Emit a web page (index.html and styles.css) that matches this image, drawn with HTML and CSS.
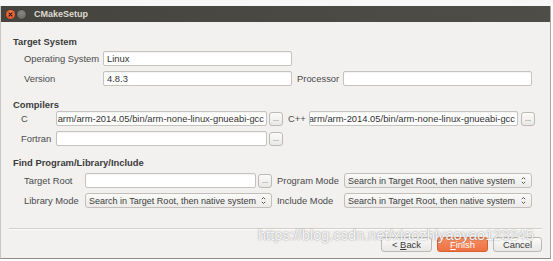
FILE: index.html
```html
<!DOCTYPE html>
<html>
<head>
<meta charset="utf-8">
<link rel="stylesheet" href="styles.css">
</head>
<body>
<div class="screen">
  <div class="topstrip"></div>
  <div class="window">
    <div class="titlebar">
      <span class="wbtn close"><svg width="9" height="9" viewBox="0 0 9 9"><path d="M3 3 L6 6 M6 3 L3 6" stroke="#3a1a10" stroke-width="1.1" stroke-linecap="round"/></svg></span>
      <span class="wbtn min"></span>
      <span class="title">CMakeSetup</span>
    </div>
    <div class="body">
      <section class="group g-target">
        <div class="heading">Target System</div>
        <div class="grid grid-target">
          <label class="lbl">Operating System</label>
          <div class="input">Linux</div>
          <span></span><span></span>
          <label class="lbl">Version</label>
          <div class="input">4.8.3</div>
          <label class="lbl lbl-gap">Processor</label>
          <div class="input"></div>
        </div>
      </section>

      <section class="group g-comp">
        <div class="heading">Compilers</div>
        <div class="grid grid-comp">
          <label class="lbl">C</label>
          <div class="input path"><span>arm/arm-2014.05/bin/arm-none-linux-gnueabi-gcc</span></div>
          <button class="dots">...</button>
          <label class="lbl lbl-gap">C++</label>
          <div class="input path"><span>arm/arm-2014.05/bin/arm-none-linux-gnueabi-gcc</span></div>
          <button class="dots">...</button>
          <label class="lbl">Fortran</label>
          <div class="input"></div>
          <button class="dots">...</button>
        </div>
      </section>

      <section class="group g-find">
        <div class="heading">Find Program/Library/Include</div>
        <div class="grid grid-find">
          <label class="lbl">Target Root</label>
          <div class="input"></div>
          <button class="dots">...</button>
          <label class="lbl lbl-gap">Program Mode</label>
          <div class="combo"><span>Search in Target Root, then native system</span><svg width="5" height="9" viewBox="0 0 5 9"><path d="M0.8 3.2 L2.5 1.5 L4.2 3.2 M0.8 5.8 L2.5 7.5 L4.2 5.8" fill="none" stroke="#555" stroke-width="1"/></svg></div>
          <label class="lbl">Library Mode</label>
          <div class="combo span2"><span>Search in Target Root, then native system</span><svg width="5" height="9" viewBox="0 0 5 9"><path d="M0.8 3.2 L2.5 1.5 L4.2 3.2 M0.8 5.8 L2.5 7.5 L4.2 5.8" fill="none" stroke="#555" stroke-width="1"/></svg></div>
          <label class="lbl lbl-gap">Include Mode</label>
          <div class="combo"><span>Search in Target Root, then native system</span><svg width="5" height="9" viewBox="0 0 5 9"><path d="M0.8 3.2 L2.5 1.5 L4.2 3.2 M0.8 5.8 L2.5 7.5 L4.2 5.8" fill="none" stroke="#555" stroke-width="1"/></svg></div>
        </div>
      </section>

      <div class="separator"></div>

      <div class="actions">
        <button class="btn">&lt; <u>B</u>ack</button>
        <button class="btn primary"><u>F</u>inish</button>
        <button class="btn">Cancel</button>
      </div>
    </div>
    <div class="watermark">https://blog.csdn.net/xiaozhiyaoyao123245</div>
  </div>
</div>
</body>
</html>
```

FILE: styles.css
```css
* { box-sizing: border-box; }
html, body { margin: 0; padding: 0; background: #ffffff; }
body {
  width: 553px;
  height: 261px;
  overflow: hidden;
  font-family: "Liberation Sans", Arial, sans-serif;
  font-size: 9.4px;
  color: #3c3c3c;
}
.screen { width: 553px; height: 261px; }
.topstrip { height: 6px; background: #f7f7f7; }

.window {
  position: relative;
  width: 551px;
  height: 253px;
  background: #f2f1f0;
  border-left: 1px solid #c8c5c1;
  border-right: 1px solid #a9a6a2;
  border-bottom: 1px solid #8e8b87;
}

.titlebar {
  height: 16px;
  background: linear-gradient(90deg, #45443f, #4f4d48);
  display: flex;
  align-items: center;
  padding-left: 5px;
}
.wbtn {
  width: 9px;
  height: 9px;
  border-radius: 50%;
  display: flex;
}
.close {
  background: radial-gradient(circle at 50% 35%, #f47a4e, #df4b1e);
  box-shadow: 0 0 0 0.5px #5a2a18;
}
.min {
  margin-left: 2px;
  background: radial-gradient(circle at 50% 35%, #8c8a85, #5f5d58);
  box-shadow: 0 0 0 0.5px #2e2d2a;
}
.title {
  margin-left: 8px;
  font-weight: bold;
  font-size: 9px;
  color: #dfdbd2;
}

.body {
  padding: 14px 8px 0 0;
}

.heading {
  font-weight: bold;
  line-height: 12px;
  height: 12px;
  padding-left: 12px;
  color: #3c3c3c;
}
.g-target .heading { margin-bottom: 3px; }
.g-comp { margin-top: 13px; }
.g-comp .heading { margin-bottom: 0; }
.g-find { margin-top: 11px; }
.g-find .heading { margin-bottom: 4px; }

.grid {
  display: grid;
  grid-auto-rows: 15px;
  row-gap: 5px;
  align-items: center;
}
.grid-target {
  padding-left: 23px;
  grid-template-columns: 79px 189px 51px 189px;
}
.grid-comp {
  padding-left: 20px;
  grid-template-columns: 35px 211px 16px 26px 209px 17px;
}
.grid-find {
  padding-left: 23px;
  grid-template-columns: 61px 171px 16px 72px 188px;
}
.lbl {
  white-space: nowrap;
  line-height: 15px;
  color: #4a4a4a;
}
.lbl-gap { padding-left: 5px; }

.input {
  height: 15px;
  background: #ffffff;
  border: 1px solid #c6c2bd;
  border-radius: 2px;
  box-shadow: inset 0 1px 1px rgba(0,0,0,0.05);
  line-height: 13px;
  padding: 0 3px;
  color: #333;
  white-space: nowrap;
  overflow: hidden;
}
.path {
  display: flex;
  justify-content: flex-end;
  padding: 0 2px 0 0;
}

.dots {
  justify-self: end;
  width: 14px;
  height: 14px;
  padding: 0;
  margin: 0;
  font-family: inherit;
  font-size: 7px;
  line-height: 10px;
  color: #555;
  background: linear-gradient(#fbfbfa, #e9e8e6);
  border: 1px solid #bdb9b4;
  border-radius: 3px;
}

.combo {
  height: 15px;
  background: linear-gradient(#fafaf9, #ecebe9);
  border: 1px solid #c2beb9;
  border-radius: 3px;
  display: flex;
  align-items: center;
  justify-content: space-between;
  padding: 0 5px 0 3px;
  font-size: 9px;
  white-space: nowrap;
  overflow: hidden;
  color: #3c3c3c;
}
.span2 { grid-column: span 2; }

.separator {
  margin: 20px 0 0 8px;
  height: 1px;
  background: #d3d0cc;
  border-bottom: 1px solid #fbfbfa;
  box-sizing: content-box;
}

.actions {
  display: flex;
  justify-content: flex-end;
  gap: 5px;
  margin-top: 7px;
  padding-right: 0;
}
.btn {
  height: 15px;
  width: 51px;
  padding: 0;
  font-family: inherit;
  font-size: 9.4px;
  color: #3c3c3c;
  background: linear-gradient(#fbfbfa, #e8e7e5);
  border: 1px solid #bdb9b4;
  border-radius: 3px;
}
.btn:last-child { width: 49px; }
.btn u { text-decoration: underline; }
.primary {
  color: #ffffff;
  background: linear-gradient(#f58c62, #ee7142);
  border-color: #d7602f;
}

.watermark {
  position: absolute;
  left: 257px;
  top: 221px;
  font-family: "Liberation Sans", Arial, sans-serif;
  font-size: 14.6px;
  color: rgba(255,255,255,0.92);
  text-shadow: 0 0 1.5px rgba(90,90,90,0.75);
  white-space: nowrap;
  pointer-events: none;
}
```
